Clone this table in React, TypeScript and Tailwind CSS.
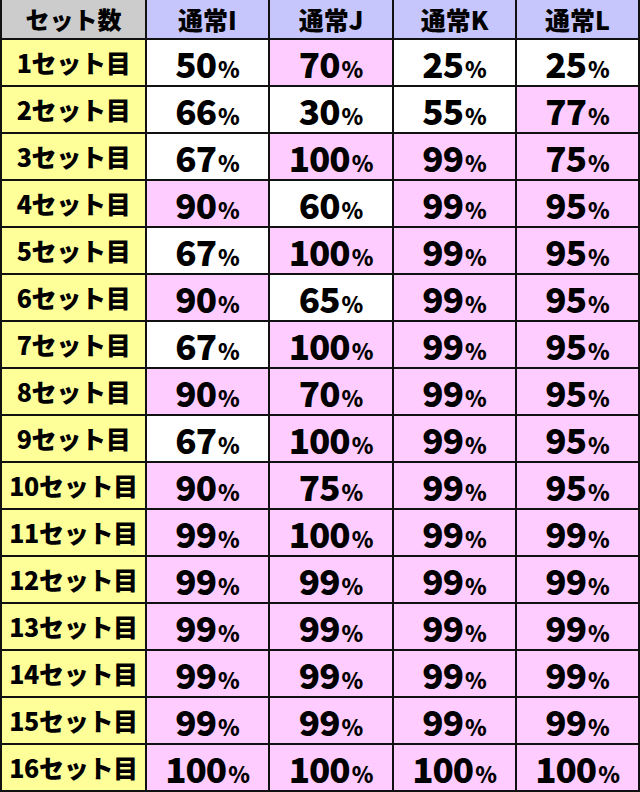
import React from "react";

type C = [string, boolean];
const rows: C[][] = [
  [["50", false], ["70", true], ["25", false], ["25", false]],
  [["66", false], ["30", false], ["55", false], ["77", true]],
  [["67", false], ["100", true], ["99", true], ["75", true]],
  [["90", true], ["60", false], ["99", true], ["95", true]],
  [["67", false], ["100", true], ["99", true], ["95", true]],
  [["90", true], ["65", false], ["99", true], ["95", true]],
  [["67", false], ["100", true], ["99", true], ["95", true]],
  [["90", true], ["70", true], ["99", true], ["95", true]],
  [["67", false], ["100", true], ["99", true], ["95", true]],
  [["90", true], ["75", true], ["99", true], ["95", true]],
  [["99", true], ["100", true], ["99", true], ["99", true]],
  [["99", true], ["99", true], ["99", true], ["99", true]],
  [["99", true], ["99", true], ["99", true], ["99", true]],
  [["99", true], ["99", true], ["99", true], ["99", true]],
  [["99", true], ["99", true], ["99", true], ["99", true]],
  [["100", true], ["100", true], ["100", true], ["100", true]],
];

const heads = ["通常I", "通常J", "通常K", "通常L"];

export default function App() {
  return (
    <div
      className="w-[640px] h-[792px] bg-[#111] px-[2px] pb-[2px] grid gap-[2px] grid-cols-[143px_121px_122px_121px_121px] grid-rows-[38px_repeat(16,45px)] text-black"
      style={{ fontFamily: '"Noto Sans CJK JP", "Noto Sans", sans-serif' }}
    >
      <div className="bg-[#cccccc] flex items-center justify-center text-[24px] font-black leading-none">
        セット数
      </div>
      {heads.map((h) => (
        <div
          key={h}
          className="bg-[#c6c6fc] flex items-center justify-center text-[25px] font-black leading-none"
        >
          {h}
        </div>
      ))}
      {rows.map((r, i) => (
        <React.Fragment key={i}>
          <div className="bg-[#ffff99] flex items-center justify-center text-[25px] font-black leading-none tracking-[-0.3px]">
            {i + 1}セット目
          </div>
          {r.map(([v, p], j) => (
            <div
              key={j}
              className={`${p ? "bg-[#ffccff]" : "bg-white"} flex items-end justify-center pb-[5px] leading-none font-black`}
            >
              <span className="text-[35px] tracking-[-1px]">{v}</span>
              <span className="text-[22px] ml-[2px] mb-[1px]">%</span>
            </div>
          ))}
        </React.Fragment>
      ))}
    </div>
  );
}
